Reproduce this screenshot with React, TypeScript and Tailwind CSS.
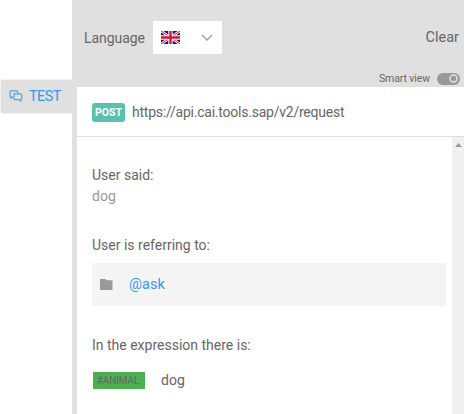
import React from "react";

function ChatIcon() {
  return (
    <svg className="h-[13px] w-[14px] shrink-0" viewBox="0 0 14 13" fill="none" stroke="#4ba3ee" strokeWidth="1.2" strokeLinejoin="round">
      <path d="M4 6.9H3.3L1.9 8.3V6.9L1 6.2V1.6L1.7.8H8L8.7 1.6V3.5" />
      <path d="M5.2 3.9H11.9L12.8 4.8V8.7L11.9 9.6V11.4L10.2 9.6H5.7L4.9 8.7V4.7Z" />
    </svg>
  );
}

function UkFlag() {
  return (
    <svg className="h-[13px] w-[19px] shrink-0" viewBox="0 0 19 13">
      <path fill="#12127e" d="M0 0H19V13H0Z" />
      <path stroke="#fff" strokeWidth="2.6" d="M0 0L19 13M19 0L0 13" />
      <path stroke="#d8142d" strokeWidth="1" d="M0 0L19 13M19 0L0 13" />
      <path stroke="#fff" strokeWidth="4.4" d="M9.5 0V13M0 6.5H19" />
      <path stroke="#d8142d" strokeWidth="2.4" d="M9.5 0V13M0 6.5H19" />
    </svg>
  );
}

export default function App() {
  return (
    <div className="flex h-[414px] w-[464px] overflow-hidden bg-white font-['Roboto',sans-serif] text-[14px] leading-[20px] text-[#666]">
      <aside className="w-[72px] shrink-0 pt-[80px] pl-px">
        <div className="flex h-[33px] items-center rounded-l-[2px] bg-[#e0e0e0] pl-[8px] text-[#3598ef] shadow-[0_0_2px_#ccc]">
          <ChatIcon />
          <span className="ml-[6px] text-[14.5px] tracking-[-0.6px]">TEST</span>
        </div>
      </aside>
      <main className="flex min-w-0 flex-1 flex-col bg-[#e0e0e0] pl-[5px]">
        <header className="h-[87px] shrink-0 pt-[21px] pl-[7px]">
          <div className="flex h-[33px] items-center pr-[5px]">
            <span className="w-[69px] tracking-[-0.05px]">Language</span>
            <div className="flex h-[33px] w-[69px] items-center rounded-[1px] bg-white pl-[8px]">
              <UkFlag />
              <svg className="ml-[21px] h-[8px] w-[12px]" viewBox="0 0 12 8" fill="none" stroke="#999" strokeWidth="1.3">
                <path d="M1 1L6 6L11 1" />
              </svg>
            </div>
            <span className="ml-auto text-[14.5px]">Clear</span>
          </div>
          <div className="mt-[14px] flex h-[20px] items-center justify-end pt-px pr-[4px] text-[10.5px]">
            <span className="tracking-[-0.1px]">Smart view</span>
            <span className="ml-[7px] flex h-[12px] w-[23px] items-center justify-end rounded-full bg-[#999] pr-[2px]">
              <svg className="h-[9px] w-[9px]" viewBox="0 0 9 9" fill="none" stroke="#e0e0e0" strokeWidth="1.6">
                <circle cx="4.5" cy="4.5" r="3.5" />
              </svg>
            </span>
          </div>
        </header>
        <div className="flex h-[50px] shrink-0 items-center border-b border-[#e0e0e0] bg-white pl-[15px]">
          <span className="mt-[2px] flex h-[19px] w-[33px] items-center justify-center rounded-[3px] bg-[#58c2ae] text-[10.5px] font-bold text-white">POST</span>
          <span className="ml-[7px] tracking-[-0.23px]">https://api.cai.tools.sap/v2/request</span>
        </div>
        <div className="flex min-h-0 flex-1 bg-white">
          <section className="w-[375px] pt-[28px] pr-[6px] pl-[15px]">
            <div>User said:</div>
            <div className="mt-px text-[#999]">dog</div>
            <div className="mt-[29px]">User is referring to:</div>
            <div className="mt-[8px] flex h-[43px] items-center bg-[#f4f4f4] pl-[8px]">
              <svg className="h-[11px] w-[13px]" viewBox="0 0 13 11">
                <path fill="#999" d="M0 0H5.3L6.6 1.2H12.5V11H0Z" />
              </svg>
              <span className="ml-[16px] pt-px text-[14.5px] text-[#3598ef]">@ask</span>
            </div>
            <div className="mt-[29px]">In the expression there is:</div>
            <div className="mt-[15px] flex h-[20px] items-center">
              <span className="ml-px flex h-[17px] w-[52px] items-center justify-center bg-[#4caf50] pt-px pr-[2px] text-[10px] tracking-[-0.1px]">#ANIMAL</span>
              <span className="ml-[16px]">dog</span>
            </div>
          </section>
          <div className="flex flex-1 justify-center bg-[#f0f0f0] pt-[6px]">
            <svg className="h-[4px] w-[7px]" viewBox="0 0 7 4">
              <path fill="#999" d="M0 4L3.5 0L7 4Z" />
            </svg>
          </div>
        </div>
      </main>
    </div>
  );
}
